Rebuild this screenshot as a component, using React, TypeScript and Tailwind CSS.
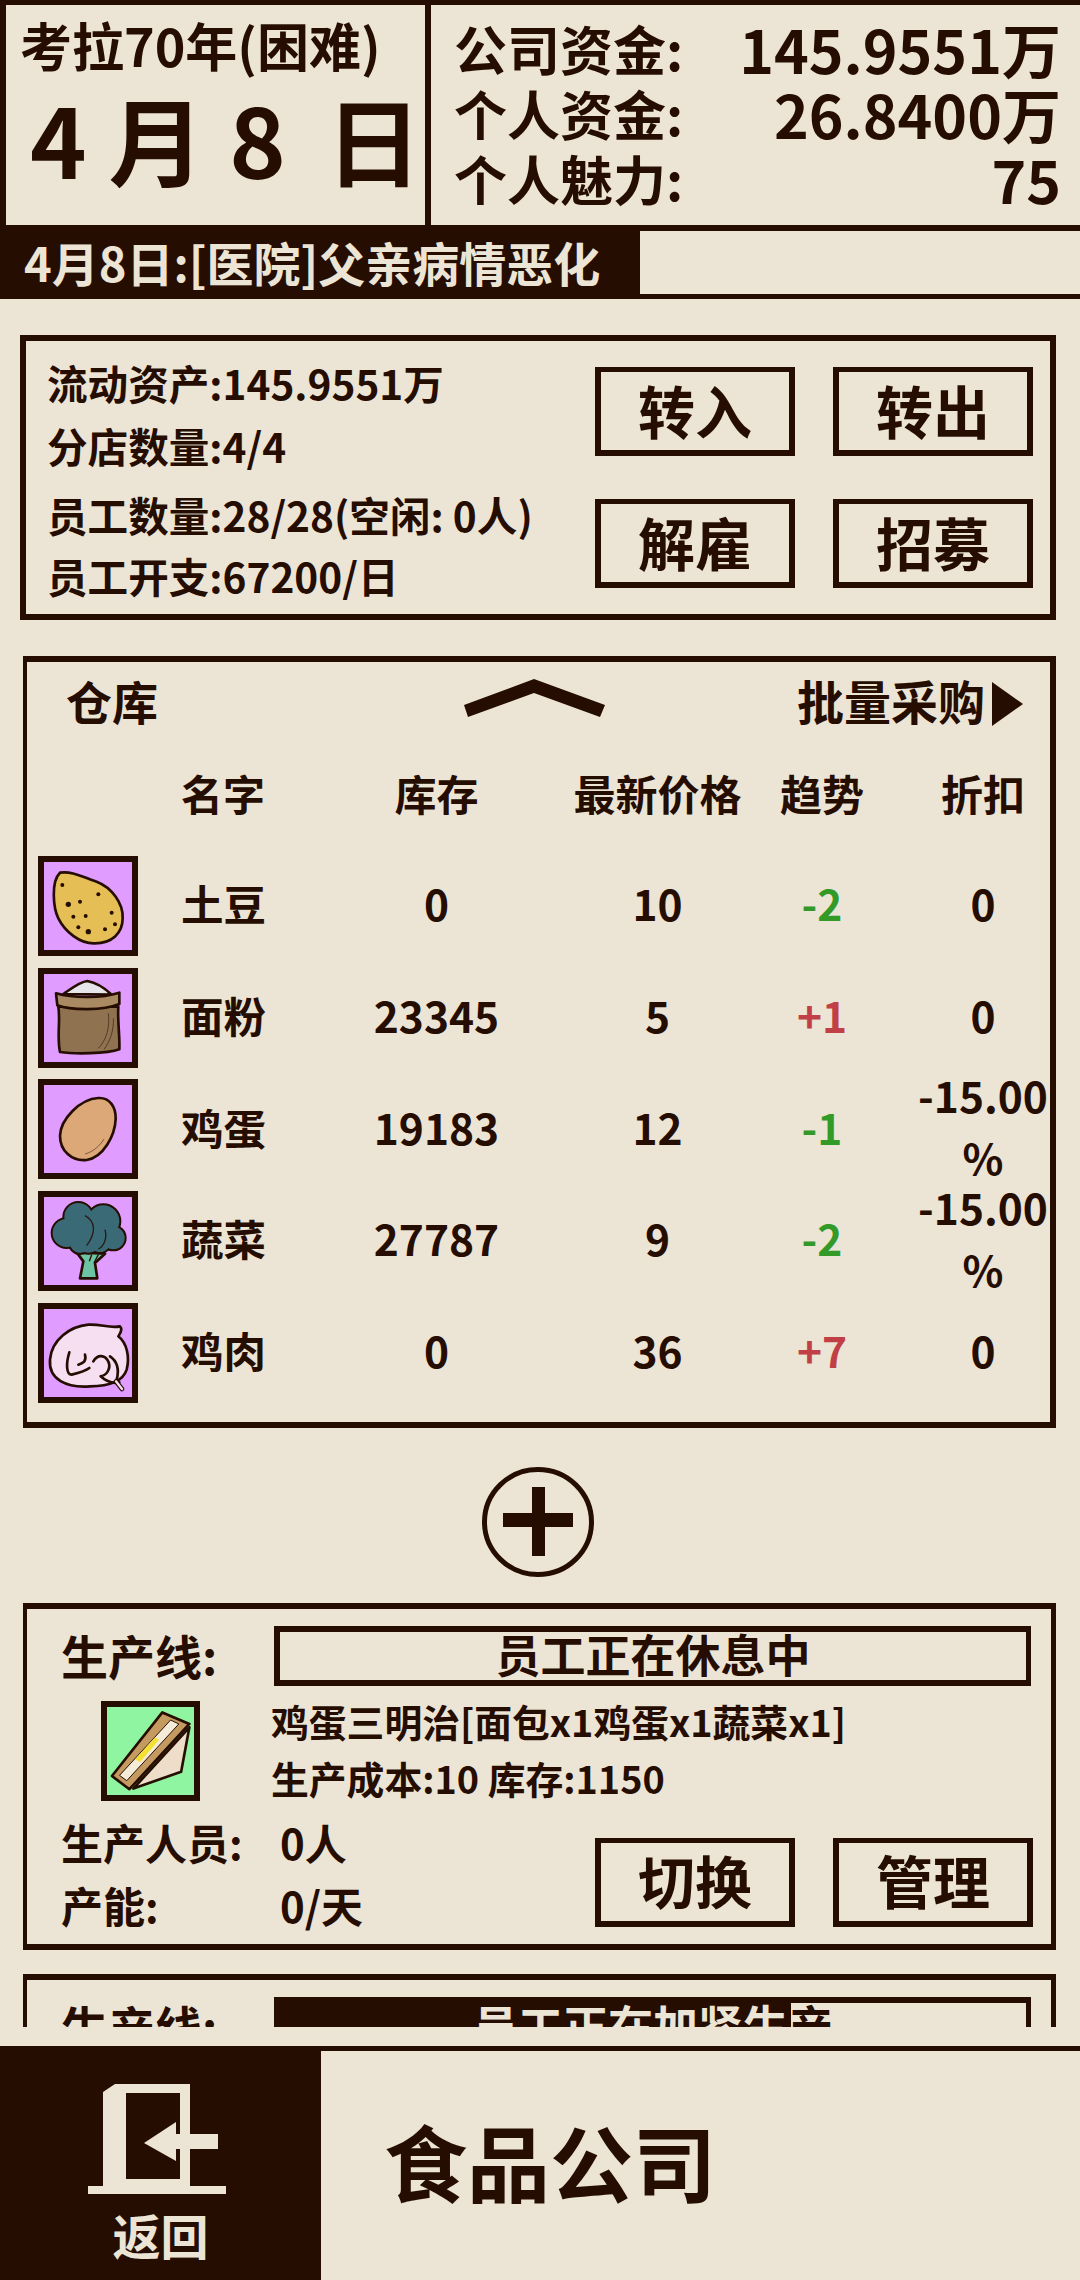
const ink = "#260d02";

function Btn({ label }: { label: string }) {
  return (
    <div className="flex h-[89px] w-[200px] items-center justify-center border-[6px] border-t-[5px] border-[#260d02] pb-[4px] text-[57px] leading-none">
      {label}
    </div>
  );
}

function ItemBox({ box, children }: { box: string; children: React.ReactNode }) {
  return (
    <div className="h-[100px] w-[100px] border-[6px] border-[#260d02]" style={{ background: box }}>
      {children}
    </div>
  );
}

const stroke = { stroke: ink, strokeWidth: 8, strokeLinejoin: "round" as const, strokeLinecap: "round" as const };

function Potato() {
  const dots = [[97,105],[115,163],[130,200],[150,155],[205,133],[245,188],[167,198],[145,232],[175,245],[225,238],[255,223]];
  return (
    <svg viewBox="42 36 264 264" className="block h-full w-full">
      <path d="M90 68C125 62 160 82 200 95C245 112 280 160 278 205C278 250 245 280 195 280C150 282 105 245 85 205C70 175 62 95 90 68Z" fill="#e5bf55" {...stroke} />
      {dots.map(([x, y], i) => <circle key={i} cx={x} cy={y} r={i === 8 || i === 1 ? 8 : 6} fill={ink} />)}
    </svg>
  );
}
function Flour() {
  return (
    <svg viewBox="42 372 264 264" className="block h-full w-full">
      <path d="M85 470L265 470C262 510 270 560 268 598C230 612 130 612 90 606C80 560 92 510 85 470Z" fill="#8f7350" {...stroke} />
      <path d="M100 432C125 415 150 395 172 393C200 398 225 415 245 434Z" fill="#e6e6ea" {...stroke} />
      <path d="M78 430C130 445 215 445 268 428L268 462C220 482 125 482 82 466Z" fill="#a98a62" {...stroke} />
      <path d="M235 490C240 530 230 570 205 595M250 505C252 540 240 575 222 598" fill="none" stroke={ink} strokeWidth="3" opacity="0.55" />
    </svg>
  );
}
function Egg() {
  return (
    <svg viewBox="42 708 264 264" className="block h-full w-full">
      <path d="M205 747C240 745 258 775 257 810C255 860 220 925 170 933C125 938 90 905 90 860C92 810 150 750 205 747Z" fill="#dca878" {...stroke} />
      <path d="M165 915C190 908 210 890 222 870" fill="none" stroke={ink} strokeWidth="3" opacity="0.5" />
    </svg>
  );
}
function Broccoli() {
  const blobs = [[145,112,42],[220,125,48],[110,160,42],[250,175,34],[175,175,44],[210,185,32],[150,190,30]];
  return (
    <svg viewBox="42 52 264 264" className="block h-full w-full">
      <path d="M140 218L160 245L150 296L202 296L195 250L225 222Z" fill="#6cc4a4" {...stroke} />
      {blobs.map(([x, y, r], i) => <circle key={i} cx={x} cy={y} r={r} fill={ink} stroke={ink} strokeWidth="12" />)}
      {blobs.map(([x, y, r], i) => <circle key={i} cx={x} cy={y} r={r} fill="#3b6a77" />)}
      <path d="M165 108C198 125 198 160 170 198M225 150C232 175 222 200 205 208" fill="none" stroke={ink} strokeWidth="4" opacity="0.85" />
      <path d="M185 225L178 245M205 225L192 250" fill="none" stroke={ink} strokeWidth="4" />
    </svg>
  );
}
function Meat() {
  return (
    <svg viewBox="42 388 264 264" className="block h-full w-full">
      <path d="M60 540C65 480 120 440 175 435C210 432 240 447 270 440C280 450 268 465 265 470C290 490 300 530 290 570C280 600 250 620 180 620C110 625 55 600 60 540Z" fill="#f6dff0" {...stroke} />
      <path d="M118 518C108 550 108 585 125 585C145 580 165 575 178 565M165 525C170 545 160 550 145 555M190 545C205 520 225 530 232 540C245 560 235 585 212 590C228 605 250 612 268 608M240 530C262 545 268 570 260 600" fill="none" {...stroke} />
      <path d="M258 605L276 628" stroke={ink} strokeWidth="14" strokeLinecap="round" />
      <path d="M258 605L276 628" stroke="#f6dff0" strokeWidth="7" strokeLinecap="round" />
    </svg>
  );
}
function Sandwich() {
  return (
    <svg viewBox="50 50 264 264" className="block h-full w-full">
      <path d="M300 110L275 245L130 296Z" fill="#eeddc8" {...stroke} />
      <path d="M218 65L300 100L118 298L65 258Z" fill="#c49a60" {...stroke} />
      <path d="M243 88L268 100L110 272L88 256Z" fill="#f4ecd8" stroke={ink} strokeWidth="3" />
      <path d="M196 140L208 148L150 216L136 206Z" fill="#f4e030" />
    </svg>
  );
}

const rows = [
  { icon: <Potato />, name: "土豆", stock: "0", price: "10", trend: "-2", disc: ["0"] },
  { icon: <Flour />, name: "面粉", stock: "23345", price: "5", trend: "+1", disc: ["0"] },
  { icon: <Egg />, name: "鸡蛋", stock: "19183", price: "12", trend: "-1", disc: ["-15.00", "%"] },
  { icon: <Broccoli />, name: "蔬菜", stock: "27787", price: "9", trend: "-2", disc: ["-15.00", "%"] },
  { icon: <Meat />, name: "鸡肉", stock: "0", price: "36", trend: "+7", disc: ["0"] },
];

function LineCard({ status, fill }: { status: string; fill?: number }) {
  return (
    <div className="ml-[23px] w-[1033px] border-[6px] border-l-4 border-r-[5px] border-[#260d02]">
      <div className="flex pt-[17px]">
        <div className="ml-[34px] h-[60px] w-[213px] text-[47px] leading-[58px]">生产线:</div>
        <div className="relative h-[60px] w-[757px] border-[6px] border-r-[5px] border-[#260d02] text-center text-[45px] leading-[44px]">
          {status}
          {fill ? (
            <div className="absolute inset-y-0 left-0 overflow-hidden bg-[#260d02] text-[#ece5d6]" style={{ width: fill }}>
              <div className="w-[746px]">{status}</div>
            </div>
          ) : null}
        </div>
      </div>
      <div className="mt-[7px] flex">
        <div className="ml-[74px] mt-[8px] h-[100px] w-[99px] border-[6px] border-[#260d02] bg-[#8ff5a0]">
          <Sandwich />
        </div>
        <div className="ml-[71px] text-[37.8px] leading-[57px]">
          <div className="-mt-[1px]">鸡蛋三明治[面包x1鸡蛋x1蔬菜x1]</div>
          <div>生产成本:10 库存:1150</div>
        </div>
      </div>
      <div className="mt-[7px] flex pb-[8px]">
        <div className="ml-[34px] w-[534px] text-[42px] leading-[63px]">
          <div className="-mt-[3px] flex"><span className="w-[219px]">生产人员:</span><span>0人</span></div>
          <div className="flex"><span className="w-[219px]">产能:</span><span>0/天</span></div>
        </div>
        <div className="mt-[25px] flex gap-[38px]">
          <Btn label="切换" />
          <Btn label="管理" />
        </div>
      </div>
    </div>
  );
}

export default function App() {
  return (
    <div className="flex h-[2280px] w-[1080px] flex-col overflow-hidden bg-[#ece5d6] font-['Noto_Sans_CJK_SC',sans-serif] font-bold text-[#260d02]">
      <header className="flex h-[225px] shrink-0 gap-[6px] bg-[#260d02] pl-[6px] pt-[5px]">
        <div className="w-[419px] bg-[#ece5d6]">
          <div className="pl-[14px] pt-[8px] text-[52px] leading-[64px]">考拉70年(困难)</div>
          <div className="mt-[6px] whitespace-pre pl-[24px] text-[96px] leading-[110px]">
            4 月<span className="ml-[3px]"> 8</span><span className="ml-[18px]"> 日</span>
          </div>
        </div>
        <div className="flex-1 bg-[#ece5d6] pl-[23px] pr-[19px] pt-[11px] text-[53px] leading-[65px]">
          <div className="flex items-center justify-between"><span>公司资金:</span><span className="text-[59px]">145.9551万</span></div>
          <div className="flex items-center justify-between"><span>个人资金:</span><span className="text-[59px]">26.8400万</span></div>
          <div className="flex items-center justify-between"><span>个人魅力:</span><span className="text-[59px]">75</span></div>
        </div>
      </header>
      <div className="flex h-[74px] shrink-0 bg-[#260d02]">
        <div className="w-[640px] pl-[24px] text-[47px] leading-[74px] text-[#ece5d6]">4月8日:[医院]父亲病情恶化</div>
        <div className="mb-[5px] mt-[6px] flex-1 bg-[#ece5d6]" />
      </div>

      <main className="h-[1728px] shrink-0 overflow-hidden pt-[36px]">
        <section className="ml-[20px] flex h-[285px] w-[1036px] border-[6px] border-[#260d02]">
          <div className="w-[569px] pl-[21px] pt-[10px] text-[40.6px]">
            <div className="h-[63px] leading-[63px]">流动资产:145.9551万</div>
            <div className="h-[63px] leading-[63px]">分店数量:4/4</div>
            <div className="mt-[7px] h-[61px] leading-[61px]">员工数量:28/28(空闲: 0人)</div>
            <div className="h-[61px] leading-[61px]">员工开支:67200/日</div>
          </div>
          <div className="mt-[26px] grid h-[221px] grid-cols-[200px_200px] content-between gap-x-[38px]">
            <Btn label="转入" />
            <Btn label="转出" />
            <Btn label="解雇" />
            <Btn label="招募" />
          </div>
        </section>

        <section className="ml-[23px] mt-[36px] w-[1033px] border-[6px] border-l-4 border-[#260d02] pb-[13px]">
          <div className="flex h-[84px] items-center pl-[39px] pr-[27px] text-[47px]">
            <span className="mb-[7px] w-[398px] text-[46px]">仓库</span>
            <svg viewBox="0 0 141 38" className="mb-[12px] h-[38px] w-[141px]">
              <path d="M0 26L70 0L141 26L136 38L70 14L4 38Z" fill={ink} />
            </svg>
            <span className="mb-[7px] ml-auto">批量采购</span>
            <svg viewBox="0 0 31 44" className="ml-[7px] h-[44px] w-[31px]">
              <path d="M0 0L31 22L0 44Z" fill={ink} />
            </svg>
          </div>
          <div className="mb-[4px] grid h-[100px] grid-cols-[154px_152px_207px_235px_94px_179px] items-center pb-[8px] text-[42px]">
            <span />
            <span>名字</span>
            <span className="text-center">库存</span>
            <span className="text-center">最新价格</span>
            <span className="text-center">趋势</span>
            <span className="pl-[49px] text-center">折扣</span>
          </div>
          {rows.map((r) => (
            <div key={r.name} className="grid h-[111.75px] grid-cols-[154px_152px_207px_235px_94px_179px] items-center text-[42.5px]">
              <div className="pl-[11px]"><ItemBox box="#e19cff">{r.icon}</ItemBox></div>
              <span className="mb-[6px]">{r.name}</span>
              <span className="mb-[6px] text-center">{r.stock}</span>
              <span className="mb-[6px] text-center">{r.price}</span>
              <span className={r.trend.startsWith("-") ? "mb-[6px] text-center text-[#339a28]" : "mb-[6px] text-center text-[#c04045]"}>{r.trend}</span>
              <div className="mb-[6px] flex h-[62px] flex-col justify-center pl-[49px] text-center leading-[62px]">
                {r.disc.map((d) => <div key={d} className="shrink-0">{d}</div>)}
              </div>
            </div>
          ))}
        </section>

        <svg viewBox="0 0 112 110" className="ml-[482px] mt-[39px] block h-[110px] w-[112px]">
          <ellipse cx="56" cy="55" rx="53.5" ry="52.5" fill="none" stroke={ink} strokeWidth="5" />
          <path d="M21 46H50V20H63V46H91V60H63V89H50V60H21Z" fill={ink} />
        </svg>

        <div className="mt-[26px] flex flex-col gap-[24px]">
          <LineCard status="员工正在休息中" />
          <LineCard status="员工正在加紧生产" fill={511} />
        </div>
      </main>

      <footer className="mt-auto flex h-[234px] shrink-0">
        <div className="flex w-[321px] flex-col bg-[#260d02] text-[#ece5d6]">
          <svg viewBox="0 0 138 110" className="ml-[88px] mt-[38px] h-[110px] w-[138px]">
            <path fillRule="evenodd" d="M15 8L27 0H102V50H130V65H102V102H138V110H0V102H15ZM38 9V95H92V65H88V77L56 59L88 38V50H92V9Z" fill="#ece5d6" />
          </svg>
          <div className="mt-[10px] text-center text-[48px] leading-[60px]">返回</div>
        </div>
        <div className="flex flex-1 items-center border-t-[5px] border-[#260d02] pb-[10px] pl-[63px] text-[83px] leading-none">食品公司</div>
      </footer>
    </div>
  );
}
